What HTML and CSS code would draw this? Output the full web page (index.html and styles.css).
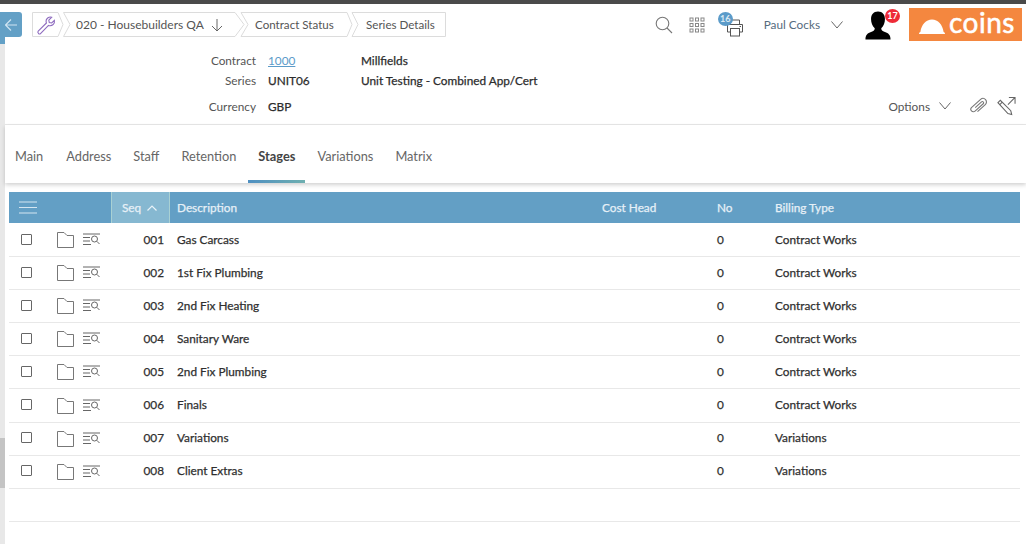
FILE: index.html
```html
<!DOCTYPE html>
<html lang="en">
<head>
  <meta charset="UTF-8" />
  <title>Series Details</title>
  <link rel="stylesheet" href="styles.css">
</head>
<body>
  <div class="scroll-track"><div class="scroll-thumb"></div></div>

  <header class="topbar">
    <a class="back">
      <svg width="14" height="14" viewBox="0 0 14 14"><path d="M13 7H1.500M7 1.500 1.500 7 7 12.500" fill="none" stroke="#cfe4f2" stroke-width="1.200"/></svg>
    </a>
    <nav class="crumbs">
      <svg class="crumb-shapes" width="414" height="25" viewBox="0 0 414 25" fill="#fff" stroke="#dcdcdc">
        <path d="M.5.5H26L31 12.500 26 24.500H.5z"/>
        <path d="M31.500.5H203L212 12.500 203 24.500H31.500L38 12.500z"/>
        <path d="M209 .5H315L320 12.500 315 24.500H209L216 12.500z"/>
        <path d="M320 .5H413.500V24.500H320L326 12.500z"/>
      </svg>
      <span class="crumb crumb-icon">
        <svg width="20" height="20" viewBox="0 0 20 20"><path d="M2.200 16.200 10.400 8c-.7-2 0-4 1.600-5.200 1.100-.8 2.500-1 3.700-.6l-2.900 2.900.5 2.400 2.400.5 2.700-2.700c.3 1.600-.2 3.100-1.300 4.200-1.300 1.200-3 1.500-4.600.9l-8 8.200c-.6.6-1.400.6-1.900.1-.6-.6-.9-1.900-.4-2.500z" fill="none" stroke="#8e6bbf" stroke-width="1.100"/></svg>
      </span>
      <span class="crumb crumb-first">020 - Housebuilders QA
        <svg width="12" height="14" viewBox="0 0 12 14"><path d="M6 1v12M1 8l5 5 5-5" fill="none" stroke="#666" stroke-width="1"/></svg>
      </span>
      <span class="crumb crumb-status">Contract Status</span>
      <span class="crumb crumb-last">Series Details</span>
    </nav>

    <div class="tools">
      <svg class="tool-search" width="18" height="18" viewBox="0 0 18 18"><circle cx="7.500" cy="7.500" r="6.300" fill="none" stroke="#777" stroke-width="1.100"/><path d="m12 12 5 5" stroke="#777" stroke-width="1.100"/></svg>
      <svg class="tool-grid" width="16" height="16" viewBox="0 0 16 16" fill="none" stroke="#888"><rect x="1" y="1" width="3" height="3"/><rect x="6.500" y="1" width="3" height="3"/><rect x="12" y="1" width="3" height="3"/><rect x="1" y="6.500" width="3" height="3"/><rect x="6.500" y="6.500" width="3" height="3"/><rect x="12" y="6.500" width="3" height="3"/><rect x="1" y="12" width="3" height="3"/><rect x="6.500" y="12" width="3" height="3"/><rect x="12" y="12" width="3" height="3"/></svg>
      <span class="tool-print">
        <svg width="18" height="18" viewBox="0 0 18 18" fill="none" stroke="#555"><path d="M4.500 5V1h9v4M4.500 13H1.500V5.500h15V13h-3"/><rect x="4.500" y="9.500" width="9" height="7.500"/><path d="M13.500 7.500h1.500"/></svg>
        <b class="badge badge-blue">16</b>
      </span>
      <span class="user">Paul Cocks</span>
      <svg class="chevron-down" width="12" height="8" viewBox="0 0 12 8"><path d="m.5.5 5.500 6.500 5.500-6.500" fill="none" stroke="#666"/></svg>
      <span class="avatar">
        <svg width="26" height="29" viewBox="0 0 28 30"><path d="M14 0c5 0 7.500 3.500 7.500 8 0 4-1.500 8-4 10 0 2 1 3 4 4 3.500 1.200 6 3 6 8H.5c0-5 2.500-6.800 6-8 3-1 4-2 4-4-2.500-2-4-6-4-10 0-4.500 2.500-8 7.500-8z" fill="#000"/></svg>
        <b class="badge badge-red">17</b>
      </span>
      <div class="logo">
        <svg width="26" height="15" viewBox="0 0 26 15"><path d="M0 15c0-1 .5-1.600 1.400-2C2.400 5.500 7 .5 13 .5S23.600 5.500 24.600 13c.9.4 1.400 1 1.400 2z" fill="#fff"/></svg>
        <span class="logo-text">coins</span>
      </div>
    </div>
  </header>

  <section class="summary">
    <div class="meta">
      <span class="meta-label">Contract</span><a class="meta-link">1000</a><strong>Millfields</strong>
      <span class="meta-label">Series</span><strong>UNIT06</strong><strong>Unit Testing - Combined App/Cert</strong>
      <span class="meta-label">Currency</span><strong>GBP</strong><span></span>
    </div>
    <div class="options">
      <span>Options</span>
      <svg class="chevron-down" width="12" height="8" viewBox="0 0 12 8"><path d="m.5.5 5.500 6.500 5.500-6.500" fill="none" stroke="#666"/></svg>
      <svg class="clip" width="19" height="18" viewBox="0 0 19 18" fill="none" stroke="#777" stroke-width="1.100"><g transform="rotate(-42 9.500 9)"><path d="M5 12.500H15.500a3.500 3.500 0 0 0 0-7H3.500a2.500 2.500 0 0 0 0 5H14.500a1.200 1.200 0 0 0 0-2.500H6"/></g></svg>
      <svg class="edit" width="19" height="20" viewBox="0 0 20 20" fill="none" stroke="#666" stroke-width="1.100"><path d="M1 6.500 3.500 4l11 11 1 4-4-1z"/><path d="M3 8.500 5.500 6M12.500 1H19v6.500M19 1l-7.500 7.500"/></svg>
    </div>
  </section>

  <nav class="tabs">
    <a>Main</a>
    <a>Address</a>
    <a>Staff</a>
    <a>Retention</a>
    <a class="active">Stages</a>
    <a>Variations</a>
    <a>Matrix</a>
  </nav>

  <main class="grid">
    <div class="row head">
      <span class="col-menu">
        <svg width="18" height="13" viewBox="0 0 18 13" stroke="#d5e6f1"><path d="M0 1h18M0 6.500h18M0 12h18"/></svg>
      </span>
      <span class="col-seq sorted">Seq
        <svg width="10" height="6" viewBox="0 0 10 6"><path d="m.5 5.500 4.500-4.500 4.500 4.500" fill="none" stroke="#e8f2f8" stroke-width="1.200"/></svg>
      </span>
      <span class="col-desc">Description</span>
      <span>Cost Head</span>
      <span>No</span>
      <span>Billing Type</span>
    </div>
    <div id="rows"></div>
    <div class="row blank"></div>
  </main>

  <script>
    const stages = [
      ['001', 'Gas Carcass', 'Contract Works'],
      ['002', '1st Fix Plumbing', 'Contract Works'],
      ['003', '2nd Fix Heating', 'Contract Works'],
      ['004', 'Sanitary Ware', 'Contract Works'],
      ['005', '2nd Fix Plumbing', 'Contract Works'],
      ['006', 'Finals', 'Contract Works'],
      ['007', 'Variations', 'Variations'],
      ['008', 'Client Extras', 'Variations']
    ];

    const rowIcons = `
      <span class="col-menu cell-icons">
        <i class="check"></i>
        <svg class="folder" width="17" height="16" viewBox="0 0 17 16"><path d="M.5 15.500V.5h6.500l3 3h6.500v12z" fill="none" stroke="#777"/></svg>
        <svg width="17" height="12" viewBox="0 0 17 12" fill="none" stroke="#666"><path d="M0 1h17M0 4.500h7M0 8h7M0 11.500h8"/><circle cx="11.500" cy="6" r="3"/><path d="m13.800 8.300 2.700 2.700"/></svg>
      </span>`;

    document.getElementById('rows').innerHTML = stages.map(s => `
      <div class="row">
        ${rowIcons}
        <span class="col-seq">${s[0]}</span>
        <span class="col-desc">${s[1]}</span>
        <span></span>
        <span>0</span>
        <span>${s[2]}</span>
      </div>`).join('');
  </script>
</body>
</html>
```

FILE: styles.css
```css
html, body {
  margin: 0;
  padding: 0;
  height: 544px;
  overflow: hidden;
  background: #fff;
  font-family: "Lato", "Liberation Sans", sans-serif;
  font-size: 11.800px;
  color: #333;
}

body {
  border-top: 4px solid #4a4a4a;
  box-sizing: border-box;
  padding-left: 5px;
  position: relative;
}

.scroll-track {
  position: absolute;
  left: 0;
  top: 40px;
  bottom: 0;
  width: 5px;
  background: #e8e8e8;
}

.scroll-thumb {
  margin-top: 394px;
  height: 50px;
  background: #c4c4c4;
}

/* top bar */
.topbar {
  display: flex;
  align-items: flex-start;
  height: 42px;
  margin-left: -5px;
  padding-top: 8px;
  box-sizing: border-box;
}

.back {
  width: 22px;
  height: 25px;
  background: #63a0c6;
  border-radius: 0 3px 3px 0;
  display: flex;
  align-items: center;
  justify-content: center;
  margin-right: 10px;
  position: relative;
}

/* darker tab that runs down to the scroll track */
.back::before {
  content: "";
  position: absolute;
  left: 0;
  top: 0;
  width: 5px;
  height: 32px;
  background: #63a0c6;
}

.crumbs {
  display: flex;
  align-items: center;
  width: 414px;
  height: 25px;
  font-size: 12px;
  color: #555;
  white-space: nowrap;
  position: relative;
}

.crumb-shapes {
  position: absolute;
  left: 0;
  top: 0;
}

.crumb {
  display: flex;
  align-items: center;
  position: relative;
  box-sizing: border-box;
}

.crumb-icon { width: 44px; padding-left: 4px; }
.crumb-first { width: 179px; gap: 7px; }
.crumb-status { width: 111px; font-size: 11.600px; }
.crumb-last { font-size: 11.600px; }

.tools {
  display: flex;
  align-items: center;
  margin-left: auto;
  height: 33px;
  margin-right: 4px;
  margin-top: -4px;
  color: #566b7e;
}

.tool-search { margin-right: 16px; }
.tool-grid { margin-right: 21px; }
.tool-print { position: relative; display: flex; margin-right: 20px; margin-top: 7px; }
.user { margin-right: 11px; }
.tools > .chevron-down { margin-right: 22px; }

.avatar { position: relative; display: flex; margin-right: 18px; margin-top: 1px; }

.badge {
  position: absolute;
  min-width: 15px;
  height: 14px;
  line-height: 14px;
  border-radius: 50%;
  color: #fff;
  font-size: 9px;
  font-weight: 700;
  text-align: center;
}

.badge-blue { background: #5b9bc9; left: -8px; top: -7px; color: #dbe9f3; }
.badge-red { background: #ee2b37; left: 20px; top: -2px; }

.logo {
  width: 113px;
  height: 33px;
  background: #f4873f;
  display: flex;
  align-items: center;
  gap: 4px;
  padding-left: 10px;
  box-sizing: border-box;
}

.logo svg { margin-top: 3px; }

.logo-text {
  color: #fff;
  font-size: 28px;
  font-weight: 400;
  line-height: 33px;
  letter-spacing: 0.5px;
  margin-top: -4px;
  -webkit-text-stroke: 0.5px #fff;
}

/* contract summary */
.summary {
  height: 79px;
  border-bottom: 1px solid #e8e8e8;
  box-sizing: border-box;
  display: flex;
  justify-content: space-between;
  align-items: flex-end;
}

.meta {
  display: grid;
  grid-template-columns: 251px 81px auto;
  grid-template-rows: 20px 20px 32px;
  column-gap: 12px;
  align-items: center;
  align-self: flex-start;
  padding-top: 4px;
}

.meta strong { font-weight: 400; color: #2c2c2c; -webkit-text-stroke: 0.25px #2c2c2c; }
.meta-label { text-align: right; color: #555; }
.meta-link { color: #5b9bc9; text-decoration: underline; }

.options {
  display: flex;
  align-items: center;
  margin-right: 10px;
  margin-bottom: 8px;
  color: #555;
}

.options .chevron-down { margin-left: 9px; margin-right: 18px; }
.options .edit { margin-left: 9px; }

/* tabs */
.tabs {
  display: flex;
  height: 58px;
  align-items: center;
  box-shadow: 0 2px 4px rgba(0,0,0,0.18);
  font-size: 12.800px;
  color: #666;
  position: relative;
}

.tabs a {
  height: 58px;
  line-height: 62px;
  padding: 0 10px;
  margin-right: 2px;
  box-sizing: border-box;
  white-space: nowrap;
}

.tabs a:first-child { margin-right: 3px; }

.tabs a.active {
  font-weight: 700;
  color: #444;
  border-bottom: 3px solid;
  border-image: linear-gradient(to right, #4e8fc2, #6fb0b0) 1;
}

/* stages grid */
.grid {
  margin: 9px 6px 0 4px;
}

#rows { margin-top: 1px; }

.row {
  display: grid;
  grid-template-columns: 102px 58px 433px 115px 58px 1fr;
  height: 33.100px;
  padding-bottom: 2px;
  align-items: center;
  border-bottom: 1px solid #e8e8e8;
  box-sizing: border-box;
  color: #2f2f2f;
  -webkit-text-stroke: 0.25px #2f2f2f;
}

.row.head {
  grid-template-columns: 102px 59px 432px 115px 58px 1fr;
  height: 31px;
  padding-bottom: 0;
  background: #639fc5;
  color: #e6f0f7;
  -webkit-text-stroke: 0.25px #e6f0f7;
  border-bottom: none;
  align-items: stretch;
  line-height: 31px;
}

.head .col-menu { display: flex; align-items: center; padding-left: 10px; }

.head .sorted {
  background: #86b8d1;
  border-left: 1px solid #a9d1d4;
  border-right: 1px solid #a9d1d4;
  text-align: left;
  padding: 0 0 0 10px;
  display: flex;
  align-items: center;
  gap: 6px;
  box-sizing: border-box;
}

.col-seq { text-align: right; padding-right: 5px; }
.col-desc { padding-left: 8px; }
.head .col-desc { padding-left: 7px; }

.cell-icons { display: flex; align-items: center; padding-left: 12px; }

.check {
  width: 9px;
  height: 9px;
  border: 1px solid #666;
  border-radius: 1px;
  margin-right: 25px;
}

.folder { margin-right: 9px; margin-top: 2px; }
```
